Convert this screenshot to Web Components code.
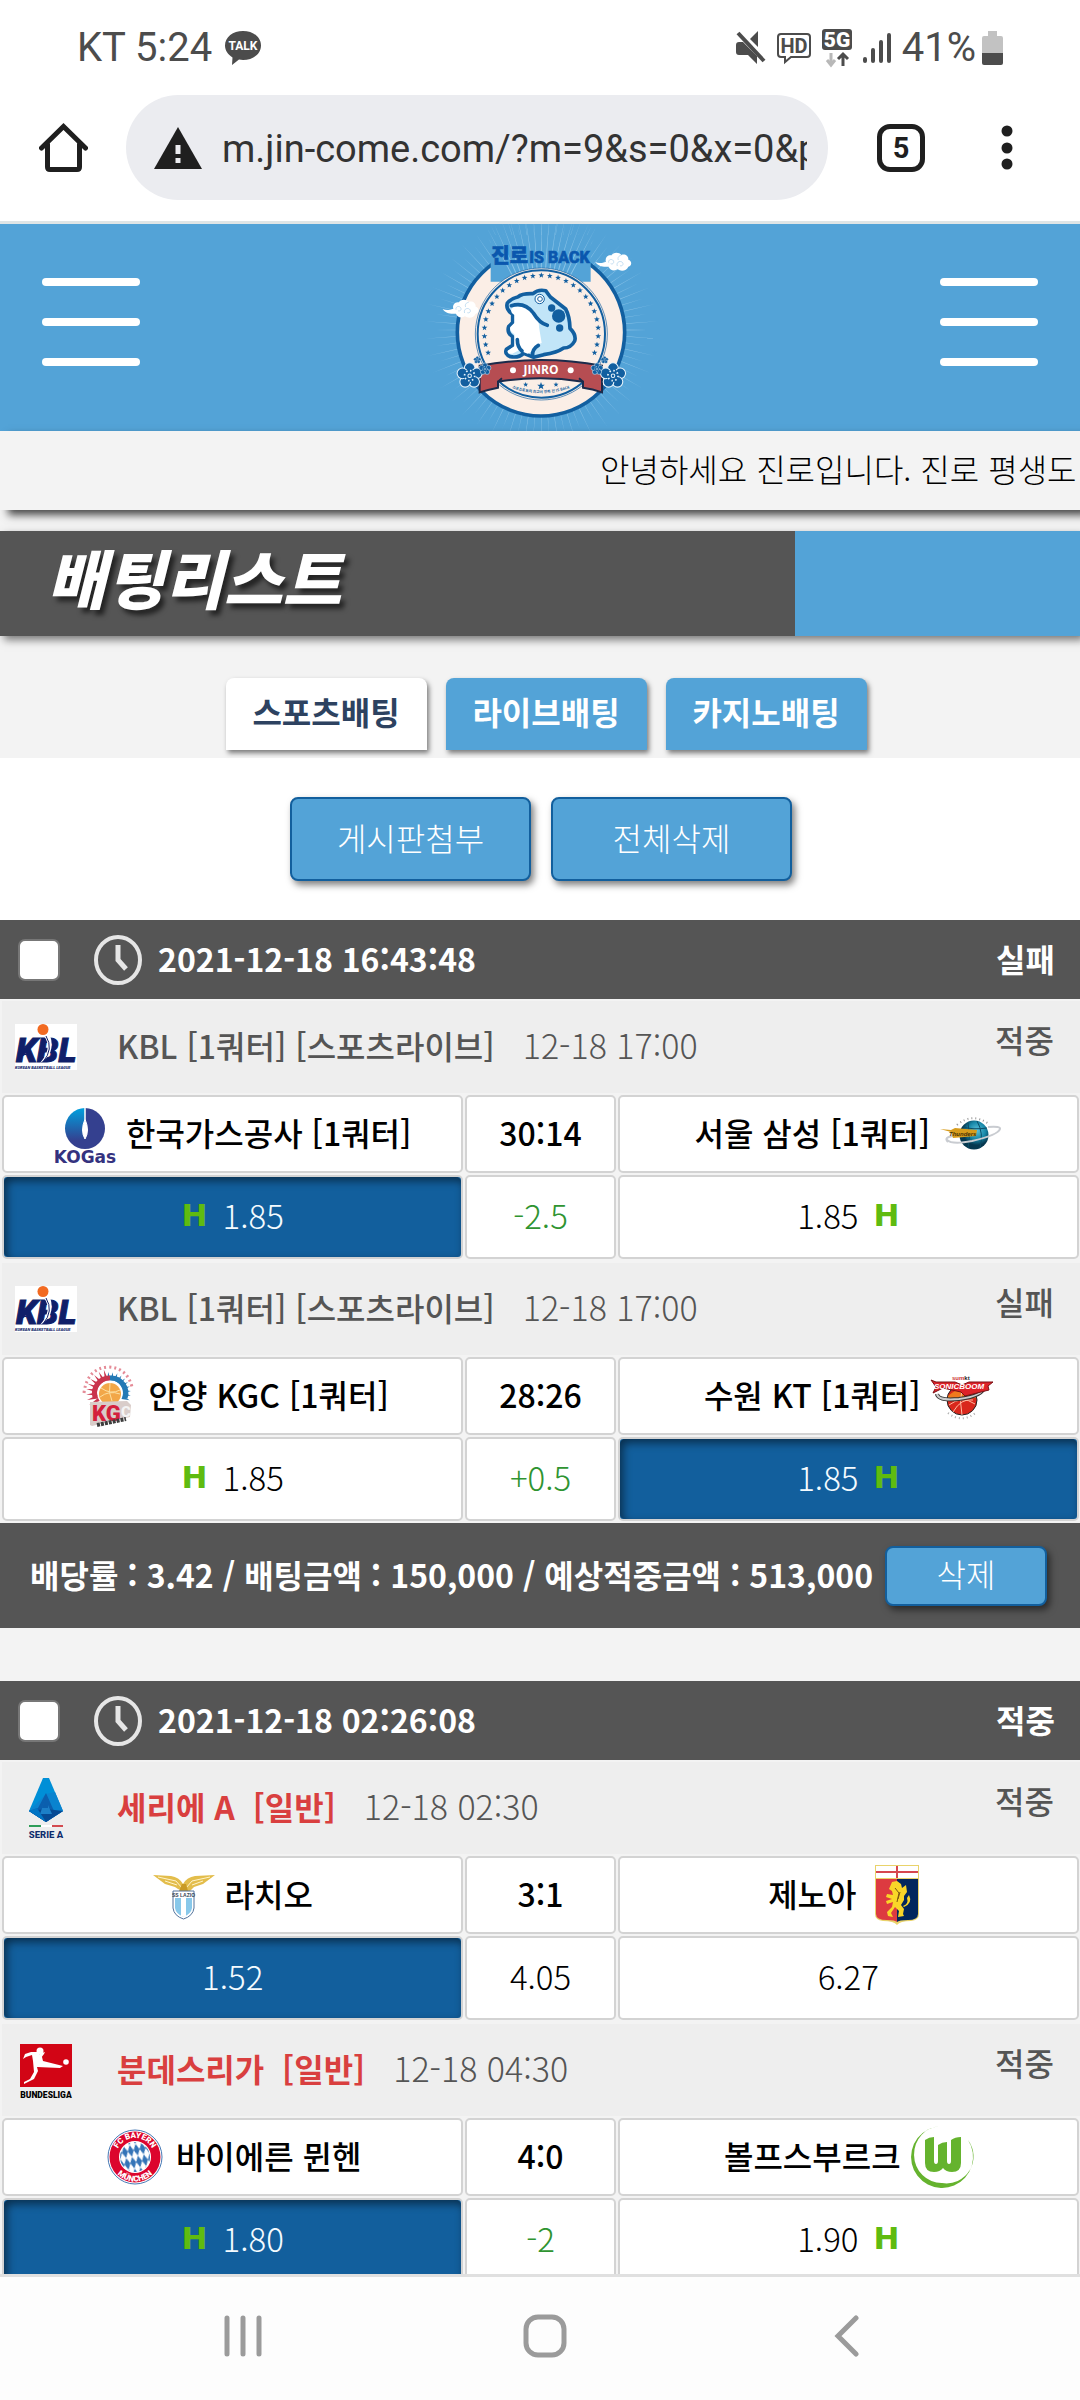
<!DOCTYPE html>
<html lang="ko">
<head>
<meta charset="utf-8">
<meta name="viewport" content="width=device-width, initial-scale=1">
<title>배팅리스트</title>
<style>
  html, body { margin: 0; height: 100%; }
  body {
    --blue: #53a3d7;
    --deep: #125f9d;
    --dark: #555;
    --page: #f3f3f3;
    display: flex;
    flex-direction: column;
    overflow: hidden;
    background: #fff;
    color: #000;
    font: 32px/40px "Noto Sans CJK KR", "Noto Sans", sans-serif;
  }
  main {
    flex: 1;
    min-height: 0;
    overflow: hidden;
    background: var(--page);
    border-top: 3px solid #dfe5e6;
    border-bottom: 3px solid #e0e0e0;
  }
  .tabs { display: flex; justify-content: center; gap: 19px; padding: 42px 0 8px 12px; }
  .actions { display: flex; justify-content: center; gap: 20px; padding: 39px 0 39px 2px; background: #fff; }
  bet-slip + bet-slip { margin-top: 53px; }
</style>
</head>
<body>
  <status-bar></status-bar>
  <browser-bar url="m.jin-come.com/?m=9&amp;s=0&amp;x=0&amp;p" tabs="5"></browser-bar>

  <main>
    <site-header></site-header>
    <notice-ticker>안녕하세요 진로입니다. 진로 평생도</notice-ticker>
    <page-title>배팅리스트</page-title>
    <nav class="tabs">
      <bet-tab active>스포츠배팅</bet-tab>
      <bet-tab>라이브배팅</bet-tab>
      <bet-tab>카지노배팅</bet-tab>
    </nav>
    <div class="actions">
      <action-button>게시판첨부</action-button>
      <action-button>전체삭제</action-button>
    </div>

    <bet-slip date="2021-12-18 16:43:48" result="실패" summary="배당률 : 3.42 / 배팅금액 : 150,000 / 예상적중금액 : 513,000">
      <bet-match logo="kbl" time="12-18 17:00" result="적중" home="한국가스공사 [1쿼터]" home-logo="kogas" away="서울 삼성 [1쿼터]" away-logo="samsung" score="30:14" odds="1.85,-2.5,1.85" handicap pick="home">KBL [1쿼터] [스포츠라이브]</bet-match>
      <bet-match logo="kbl" time="12-18 17:00" result="실패" home="안양 KGC [1쿼터]" home-logo="kgc" away="수원 KT [1쿼터]" away-logo="kt" score="28:26" odds="1.85,+0.5,1.85" handicap pick="away">KBL [1쿼터] [스포츠라이브]</bet-match>
    </bet-slip>

    <bet-slip date="2021-12-18 02:26:08" result="적중">
      <bet-match class="soccer" logo="seriea" time="12-18 02:30" result="적중" home="라치오" home-logo="lazio" away="제노아" away-logo="genoa" score="3:1" odds="1.52,4.05,6.27" pick="home">세리에 A&nbsp; [일반]</bet-match>
      <bet-match class="soccer" logo="bundesliga" time="12-18 04:30" result="적중" home="바이에른 뮌헨" home-logo="bayern" away="볼프스부르크" away-logo="wolfsburg" score="4:0" odds="1.80,-2,1.90" handicap pick="home">분데스리가&nbsp; [일반]</bet-match>
    </bet-slip>
  </main>

  <system-nav></system-nav>

<script>
// ---------- helpers ----------

const star = (x, y, r) => {
  let pts = [];
  for (let i = 0; i < 10; i++) {
    const a = Math.PI * (i / 5 - 0.5);
    const k = i % 2 ? r * 0.42 : r;
    pts.push((x + k * Math.cos(a)).toFixed(1) + ',' + (y + k * Math.sin(a)).toFixed(1));
  }
  return `<polygon points="${pts.join(' ')}"/>`;
};

const ring = (n, from, to, fn) => {
  let out = '';
  for (let i = 0; i < n; i++) {
    const a = (from + (to - from) * i / (n - 1)) * Math.PI / 180;
    out += fn(a, i);
  }
  return out;
};

const ray = (cx, cy, r1, r2, w) => a => {
  const p = (r, d) => (cx + r * Math.cos(a + d)).toFixed(1) + ',' + (cy + r * Math.sin(a + d)).toFixed(1);
  return `<polygon points="${p(r1, -w)} ${p(r2, 0)} ${p(r1, w)}"/>`;
};

const flower = (x, y, r) => `
  <g fill="#125fa0" stroke="#e8f4fb" stroke-width="${r / 12}">
    ${ring(5, -90, 198, a => `<circle cx="${(x + r * 0.6 * Math.cos(a)).toFixed(1)}" cy="${(y + r * 0.6 * Math.sin(a)).toFixed(1)}" r="${(r * 0.42).toFixed(1)}"/>`)}
  </g>
  <circle cx="${x}" cy="${y}" r="${r * 0.5}" fill="#125fa0"/>
  <circle cx="${x}" cy="${y}" r="${r * 0.4}" fill="none" stroke="#e8f4fb" stroke-width="${r * 0.14}" stroke-dasharray="${r * 0.12} ${r * 0.19}"/>
  <circle cx="${x}" cy="${y}" r="${r * 0.14}" fill="none" stroke="#e8f4fb" stroke-width="${r * 0.08}"/>`;

const cloud = (x, y) => `
  <g transform="translate(${x} ${y})">
    <path fill="#fff" d="M0 28c10 5 22 3 32-1-4-12 6-22 17-19C52-2 72-3 78 7c11-4 22 3 21 14 12 3 11 19 0 21-5 13-22 15-32 8-11 7-24 2-27-8C24 44 8 41 0 28z"/>
    <path fill="none" stroke="#a9cfea" stroke-width="2" d="M40 30c-2-9 9-13 14-6 4 7-3 12-8 9M66 40c-4-9 5-17 14-12 7 6 1 14-6 11M78 8c-8 1-12 7-9 14"/>
  </g>`;

// ---------- logos ----------

const LOGOS = {
  kbl: `<svg viewBox="0 0 62 46" width="62" height="46">
    <rect width="62" height="46" fill="#fff"/>
    <text x="1" y="38" font-family="Roboto" font-weight="900" font-style="italic" font-size="34" fill="#101f69" stroke="#101f69">KBL</text>
    <path d="M29 12q9 12-4 27 16-9 10-28z" fill="#fff"/>
    <path d="M31 12q8 13-3 26" fill="none" stroke="#101f69"/>
    <circle cx="28" cy="5.500" r="5.500" fill="#f26a21"/>
    <text x="0" y="45" font-family="Roboto" font-weight="900" font-style="italic" font-size="4" fill="#101f69">KOREAN BASKETBALL LEAGUE</text>
  </svg>`,

  seriea: `<svg viewBox="0 0 62 62" width="62" height="62">
    <path d="M28 1h6l14 33-17 11-17-11z" fill="#008fd7"/>
    <path d="M31 17 14 34l17 11 17-11-8-19z" fill="#0a83cf"/>
    <path d="M31 16l8 18 9 0-17 11-17-11 9-3z" fill="#0b5fae"/>
    <path d="M14 34l17-2 17 2-17 11z" fill="#064a94"/>
    <path d="M31 20l-4 11h6v-3l4 9H25" fill="#1c7fc8"/>
    <path d="M14 34l8-3 9 14z" fill="#0074c4"/>
    <path d="M14 49h12" stroke="#2e9d58" stroke-width="2"/><path d="M26 49h11" stroke="#fff" stroke-width="2"/><path d="M37 49h11" stroke="#d34b50" stroke-width="2"/>
    <text x="31" y="61" text-anchor="middle" font-family="Roboto" font-weight="800" font-size="9.500" fill="#0d2c6c">SERIE A</text>
  </svg>`,

  bundesliga: `<svg viewBox="0 0 62 62" width="62" height="62">
    <rect x="5" y="5" width="52" height="43" fill="#d20515"/>
    <g fill="#fff"><circle cx="25" cy="12" r="3.500"/><circle cx="51" cy="23" r="2.800"/>
    <path d="M24 13 16 13 10 15 8 20 11 18 17 16 18 22 19 33 15 40 9 43 9 45 19 40 23 32 22 28 45 29 48 27 44 26 28 22 27 18 24 15z"/>
    <path d="M24 15 30 13 29 15 26 19z"/></g>
    <text x="31" y="59" text-anchor="middle" font-family="Roboto" font-weight="900" font-size="8.500" fill="#000">BUNDESLIGA</text>
  </svg>`,

  kogas: `<svg viewBox="0 0 62 62" width="62" height="62">
    <defs><linearGradient id="kg" x1="0" y1="0" x2="0" y2="1"><stop offset="0" stop-color="#00a0de"/><stop offset=".8" stop-color="#34408f"/></linearGradient></defs>
    <path d="M31 5a20 20.500 0 0 0 0 41z" fill="url(#kg)"/>
    <path d="M31 5a20 20.500 0 0 1 0 41z" fill="#34408f"/>
    <path d="M31 5v11q-5 12 0 20 5-8 0-20z" fill="#fff" stroke="#fff"/>
    <text x="31" y="60" text-anchor="middle" font-family="DejaVu Sans" font-weight="700" font-size="17" fill="#34327f">KOGas</text>
  </svg>`,

  samsung: `<svg viewBox="0 0 62 62" width="62" height="62">
    <defs><radialGradient id="sg" cx=".6" cy=".35"><stop offset="0" stop-color="#5cc4dd"/><stop offset=".6" stop-color="#1787a8"/><stop offset="1" stop-color="#06384f"/></radialGradient></defs>
    <path d="M17 22q15-13 32-1" fill="none" stroke="#999" stroke-width="2" stroke-dasharray="1 3"/>
    <circle cx="34" cy="32" r="14.500" fill="url(#sg)"/>
    <path d="M23 24q10 3 24 1M28 20q3 13 0 25M37 18q7 12 3 27" fill="none" stroke="#0b4c66"/>
    <path d="M8 39q-5-5 6-6M7 37q5 5 25 1 26-6 28-12 1-3-12-2" fill="none" stroke="#c9ccd1" stroke-width="2"/>
    <path d="M0 26l11 1 4-2 22 2-1 6-23 2-2-6z" fill="#d79c1c"/>
    <text x="9" y="33" font-family="Liberation Sans" font-weight="700" font-style="italic" font-size="6" fill="#4a3204">Thunders</text>
  </svg>`,

  kgc: `<svg viewBox="0 0 62 62" width="62" height="62">
    <path d="M7 28Q10 3 32 2q18 1 23 20" fill="none" stroke="#e58b97" stroke-width="3" stroke-dasharray="2 3"/>
    <g fill="#c9344d">${ring(9, 150, 255, ray(33, 28, 13, 24, .13))}</g>
    <g fill="#2379b5">${ring(10, 265, 380, ray(33, 28, 13, 21, .13))}</g>
    <path d="M18 32a15 15 0 0 1 15-19" fill="none" stroke="#c9344d" stroke-width="5"/>
    <path d="M33 13a15 15 0 0 1 15 20" fill="none" stroke="#2379b5" stroke-width="5"/>
    <circle cx="33" cy="29" r="11" fill="#f2a748"/>
    <path d="M24 23q10 7 19 2M33 18q-2 10 2 18M23 32q9-7 20-3" fill="none" stroke="#fde0a0"/>
    <path d="M13 37l37-1 4 4-1 12-38 9-2-1z" fill="#d9cdca"/>
    <text x="15" y="56" font-family="Roboto" font-weight="900" font-size="22" fill="#d4203c">KG</text>
    <text x="44" y="52" font-family="Roboto" font-weight="900" font-size="15" fill="#f4f4f4">C</text>
    <path d="M20 60l29-6" stroke="#3d3d3d" stroke-width="4" stroke-dasharray="3 1"/>
  </svg>`,

  kt: `<svg viewBox="0 0 62 62" width="62" height="62">
    <circle cx="31" cy="35" r="15" fill="#d9271c" stroke="#222"/>
    <path d="M17 31q14-13 28-2v4l-28 2z" fill="#ef7a1d"/>
    <path d="M18 40q13-10 26-1M31 24q-3 12 0 26M22 47q8-14 20-12" fill="none" stroke="#ffb9a0"/>
    <path d="M6 29q1 7 22 5 24-3 25-12" fill="none" stroke="#333" stroke-width="4"/>
    <path d="M6 29q1 7 22 5 24-3 25-12" fill="none" stroke="#ccc" stroke-width="2"/>
    <path d="M0 15l5 2 19 0 7 3 7-3 24 0-5 4 1 4-24 6-4-4-18-4-10 5 3-6z" fill="#dd2228" stroke="#7a1014"/>
    <text x="3" y="24" font-family="Liberation Sans" font-weight="700" font-style="italic" font-size="8" fill="#fff">SONICBOOM</text>
    <text x="21" y="15" font-family="Liberation Sans" font-weight="700" font-size="6" fill="#c33">sum<tspan fill="#222">kt</tspan></text>
    <path d="M17 48q14 11 29-1" fill="none" stroke="#aaa" stroke-width="2" stroke-dasharray="1 3"/>
  </svg>`,

  lazio: `<svg viewBox="0 0 62 62" width="62" height="62">
    <path d="M0 11l18 1q8 1 12 8 4-7 12-8l20-1-12 9-9 3-4 4-4 1-3-1-5-2-3-2-10-3z" fill="#e3bd4b"/>
    <path d="M5 13l18 4 6 7M12 17l12 4M57 13l-18 4-6 7M50 17l-11 4" fill="none" stroke="#fff4cc"/>
    <path d="M26 27l3-7h4l2 7z" fill="#c99a24"/>
    <path d="M20 27h21v17q-1 8-10.500 11Q21 52 20 44z" fill="#fff" stroke="#53739c"/>
    <path d="M22 34h17v10q-1 6-8.500 9Q23 50 22 44z" fill="#88c8ea"/>
    <path d="M28 34h5v18l-2 1-3-1z" fill="#fff"/>
    <text x="30.500" y="33" text-anchor="middle" font-family="Liberation Sans" font-weight="700" font-size="5" fill="#345">SS LAZIO</text>
  </svg>`,

  genoa: `<svg viewBox="0 0 62 62" width="62" height="62">
    <path d="M9 1h44v49q0 6-8 7-11 0-14 4-3-4-14-4-8-1-8-7z" fill="#e9d36b"/>
    <path d="M10 2h42v12H10z" fill="#fff"/>
    <path d="M10 15h21v43q-2-2-10-2-11 0-11-6z" fill="#dd3a40"/>
    <path d="M31 15h21v35q0 6-10 6-9 0-11 2z" fill="#02275d"/>
    <path d="M31 2v12M10 8h42" stroke="#d6474f" stroke-width="2"/>
    <path d="M26 18l5-1 4 3 1 4 4-3 1 7-3 4 0 4-3 5 3 4-1 5 1 2-6 1 1-6-4-4-4 6 2 4-5-1-1-4 5-5 1-5-6 2-1-3 6-2-6-2 1-3 6 1-1-4-3-2z" fill="#f9d628"/>
    <path d="M37 42q6-2 4-8l2-3q4 8-5 12z" fill="#f9d628"/>
    <path d="M29 24l4 5-2 9M34 28l-2 7" fill="none" stroke="#7a5410"/>
  </svg>`,

  bayern: `<svg viewBox="0 0 62 62" width="62" height="62">
    <defs>
      <path id="up" d="M12 31a19 19 0 0 1 38 0"/>
      <path id="down" d="M6.500 31a24.500 24.500 0 0 0 49 0"/>
      <pattern id="rhomb" width="6" height="12" patternUnits="userSpaceOnUse" patternTransform="rotate(-12)"><rect width="6" height="12" fill="#fff"/><path d="M3 0l3 6-3 6-3-6z" fill="#3474b7"/></pattern>
    </defs>
    <circle cx="31" cy="31" r="27" fill="#fff" stroke="#4679b5"/>
    <circle cx="31" cy="31" r="25.500" fill="#dc052d"/>
    <circle cx="31" cy="31" r="16" fill="#fff"/>
    <circle cx="31" cy="31" r="15" fill="url(#rhomb)"/>
    <g font-family="Roboto" font-weight="900" font-size="8" fill="#fff" text-anchor="middle">
      <text><textPath href="#up" startOffset="50%">FC BAYERN</textPath></text>
      <text><textPath href="#down" startOffset="50%">MÜNCHEN</textPath></text>
    </g>
  </svg>`,

  wolfsburg: `<svg viewBox="0 0 62 62" width="62" height="62">
    <path fill="#65b32e" d="M30 0A31 31 0 1 0 57 14 27 27 0 0 1 31 57 27 28 0 0 1 30 0z"/>
    <path fill="#65b32e" d="M14 14q4-3 9-3v24q0 3 2 3t2-3V19q4-3 9-3v19q0 3 2 3t2-3V14q4-3 10-3v26q0 9-9 9-6 0-9-4-3 4-9 4-9 0-9-9z"/>
  </svg>`,
};

class TeamLogo extends HTMLElement {
  connectedCallback() {
    this.attachShadow({ mode: 'open' }).innerHTML = `
      <style>
        :host { display: flex; flex: none; align-items: center; width: 62px; }
        svg { display: block; overflow: visible; }
      </style>
      ${LOGOS[this.getAttribute('name')]}`;
  }
}
customElements.define('team-logo', TeamLogo);

// ---------- phone chrome ----------

class StatusBar extends HTMLElement {
  connectedCallback() {
    this.attachShadow({ mode: 'open' }).innerHTML = `
      <style>
        :host {
          display: flex;
          align-items: center;
          gap: 13px;
          height: 64px;
          padding: 16px 77px 0;
          font: 40px/48px Roboto, sans-serif;
          color: #4c4c4c;
        }
        .right { display: flex; align-items: center; gap: 11px; margin-left: auto; }
        .power { display: flex; align-items: center; gap: 6px; }
        svg { display: block; overflow: visible; }
      </style>
      <span>KT 5:24</span>
      <svg width="36" height="36" viewBox="0 0 36 36" fill="#4c4c4c">
        <path d="M18 1C8 1 0 7 0 15.500c0 5 3 9 7.500 12L7 35l7-5.500 4 .5c10 0 18-6 18-14.500S28 1 18 1z"/>
        <text x="18" y="20" text-anchor="middle" font-size="12" font-weight="700" fill="#fff">TALK</text>
      </svg>
      <div class="right">
        <svg width="30" height="34" viewBox="0 0 30 34" fill="#4c4c4c">
          <path d="M0 14q0-3 3-3h4l14 14v8l-9-9H3q-3 0-3-3zM14 8l8-8v16z"/>
          <path d="M2 2l26 28" stroke="#4c4c4c" stroke-width="4"/>
        </svg>
        <svg width="34" height="30" viewBox="0 0 34 30">
          <path d="M4 1h26q3 0 3 3v17q0 3-3 3H14l-6 5v-5H4q-3 0-3-3V4q0-3 3-3z" fill="none" stroke="#4c4c4c" stroke-width="2"/>
          <text x="17" y="20" text-anchor="middle" font-size="20" font-weight="700" fill="#4c4c4c">HD</text>
        </svg>
        <svg width="30" height="40" viewBox="0 0 30 40">
          <rect y="1" width="30" height="21" rx="3" fill="#4c4c4c"/>
          <text x="15" y="19" text-anchor="middle" font-size="21" font-weight="900" fill="#fff">5G</text>
          <path d="M9 25v11M5 32l4 5 4-5" fill="none" stroke="#b8b8b8" stroke-width="3"/>
          <path d="M21 38V27M16 31l5-5 5 5" fill="none" stroke="#4c4c4c" stroke-width="3"/>
        </svg>
        <svg width="28" height="32" viewBox="0 0 28 32" stroke="#4c4c4c" stroke-width="4" stroke-linecap="round">
          <path d="M2 27v2M10 18v11M18 10v19M26 3v26"/>
        </svg>
        <div class="power">
          <span>41%</span>
          <svg width="21" height="34" viewBox="0 0 21 34">
            <path d="M6 0h9v5h4q2 0 2 2v15H0V7q0-2 2-2h4z" fill="#c2c2c2"/>
            <path d="M0 22h21v10q0 2-2 2H2q-2 0-2-2z" fill="#4c4c4c"/>
          </svg>
        </div>
      </div>`;
  }
}
customElements.define('status-bar', StatusBar);

class BrowserBar extends HTMLElement {
  connectedCallback() {
    this.attachShadow({ mode: 'open' }).innerHTML = `
      <style>
        :host { display: flex; align-items: center; padding: 15px 67px 21px 39px; }
        button { flex: none; padding: 0; border: 0; background: none; font: inherit; color: #1f1f1f; }
        svg { display: block; }
        .url {
          flex: 1;
          display: flex;
          align-items: center;
          gap: 20px;
          min-width: 0;
          height: 105px;
          box-sizing: border-box;
          margin: 0 49px 0 38px;
          padding: 0 21px 0 28px;
          border-radius: 53px;
          background: #ebecf0;
        }
        .url svg { flex: none; }
        input {
          flex: 1;
          min-width: 0;
          padding: 2px 0 0;
          border: 0;
          outline: 0;
          background: none;
          font: 38px/48px Roboto, sans-serif;
          color: #333;
        }
        .count {
          width: 48px;
          height: 48px;
          margin-right: 76px;
          border: 5px solid #1f1f1f;
          border-radius: 13px;
          font: 700 29px/38px Roboto, sans-serif;
        }
      </style>
      <button aria-label="홈">
        <svg width="49" height="50" viewBox="0 0 49 50"><path d="M2.500 25 24.500 3.500 46.500 25M8.500 21v23q0 2.500 2.500 2.500h27q2.500 0 2.500-2.500V21" fill="none" stroke="#1f1f1f" stroke-width="5" stroke-linecap="round"/></svg>
      </button>
      <div class="url">
        <svg width="48" height="42" viewBox="0 0 48 42"><path d="M24 0l24 42H0z" fill="#1f1f1f"/><path d="M24 18v9M24 31v5" stroke="#ebecf0" stroke-width="5"/></svg>
        <input type="text" aria-label="주소" readonly value="${this.getAttribute('url').replace(/&/g, '&amp;')}">
      </div>
      <button class="count" aria-label="탭">${this.getAttribute('tabs')}</button>
      <button aria-label="메뉴">
        <svg width="12" height="46" viewBox="0 0 12 46" fill="#1f1f1f"><circle cx="6" cy="6" r="5.500"/><circle cx="6" cy="23" r="5.500"/><circle cx="6" cy="39" r="5.500"/></svg>
      </button>`;
  }
}
customElements.define('browser-bar', BrowserBar);

class SystemNav extends HTMLElement {
  connectedCallback() {
    this.attachShadow({ mode: 'open' }).innerHTML = `
      <style>
        :host { display: grid; grid-template-columns: repeat(3, 1fr); height: 123px; padding: 0 82px 0 92px; box-sizing: border-box; background: #fdfdfd; }
        button { display: flex; align-items: center; justify-content: center; border: 0; background: none; padding: 0 0 6px; }
      </style>
      <button aria-label="최근 앱"><svg width="38" height="42" viewBox="0 0 38 42" stroke="#9b9b9b" stroke-width="5" stroke-linecap="round"><path d="M3 3v36M19 3v36M35 3v36"/></svg></button>
      <button aria-label="홈"><svg width="44" height="44" viewBox="0 0 44 44"><rect x="3" y="3" width="38" height="38" rx="12" fill="none" stroke="#9b9b9b" stroke-width="5"/></svg></button>
      <button aria-label="뒤로"><svg width="26" height="42" viewBox="0 0 26 42"><path d="M22 3 4 21l18 18" fill="none" stroke="#9b9b9b" stroke-width="5" stroke-linecap="round"/></svg></button>`;
  }
}
customElements.define('system-nav', SystemNav);

// ---------- site ----------

class SiteHeader extends HTMLElement {
  connectedCallback() {
    this.attachShadow({ mode: 'open' }).innerHTML = `
      <style>
        :host { display: flex; justify-content: space-between; align-items: center; height: 207px; padding: 0 42px; background: var(--blue); }
        button { display: grid; gap: 32px; width: 98px; padding: 0 0 12px; border: 0; background: none; }
        i { height: 8px; border-radius: 4px; background: #fff; }
        svg { display: block; overflow: hidden; }
      </style>
      <button aria-label="메뉴"><i></i><i></i><i></i></button>
      <a href="#" aria-label="진로 IS BACK">${this._logo()}</a>
      <button aria-label="내 정보"><i></i><i></i><i></i></button>`;
  }

  _logo() {
    return `
      <svg width="280" height="207" viewBox="0 27 840 621">
        <g fill="#8cc4e8">${ring(85, 0, 360, (a, i) => ray(424, 345, 180, i % 2 ? 350 : 320, .009)(a))}</g>
        <circle cx="423" cy="352" r="251" fill="#fbeee6" stroke="#125fa0" stroke-width="11"/>
        <path d="M272 60h300v140H272z" fill="#53a3d7"/>
        <g fill="#8cc4e8">${ring(15, -118, -62, ray(424, 345, 180, 350, .009))}</g>
        <circle cx="424" cy="357" r="198" fill="#fbeee6" stroke="#125fa0" stroke-width="2"/>
        <circle cx="424" cy="357" r="191" fill="#fbeee6" stroke="#125fa0" stroke-width="6"/>
        <g fill="#125fa0">${ring(27, -201, 21, a => star(424 + 171 * Math.cos(a), 352 + 171 * Math.sin(a), 9))}</g>
        <g fill="#0a57ae" stroke="#0a57ae" stroke-width="2">
          <text x="274" y="144" font-family="Noto Sans CJK KR" font-weight="900" font-size="60">진로</text>
          <text x="388" y="144" font-family="Roboto" font-weight="800" font-size="48">IS BACK</text>
        </g>
        ${cloud(586, 113)}
        ${cloud(128, 254)}

        <path fill="#c1e5f8" stroke="#125fa0" stroke-width="11" stroke-linejoin="round" d="M355 245q10-10 44-9 15-14 38-9l14 19q18 14 46 36 12 22 13 58 20 20 14 38-11 21-33 21-20 14-60 20l-30 8-30-12q-14 14-40 10-18-7-12-22l19-12v-26q-18-12-12-30l12-12v-25q-22-15-16-34 10-13 33-19z"/>
        <path fill="#fff" d="M340 276q40-8 62 20 16 20 15 40l8 48q-18 4-22 22l-20 10-26-10-20 10q-15 2-14-8l20-14v-36q-16-12-12-22l12-12v-24q-18-12-3-24z"/>
        <path fill="none" stroke="#125fa0" stroke-width="11" stroke-linecap="round" d="M334 272q40-12 66 22 18 30 42 37M352 374q0 22 14 34M415 391q-20 12-17 32"/>
        <circle cx="419" cy="252" r="14" fill="#fff" stroke="#125fa0" stroke-width="3"/><circle cx="420" cy="252" r="7" fill="#fff" stroke="#125fa0" stroke-width="3"/>
        <g fill="#125fa0"><circle cx="476" cy="303" r="20"/><circle cx="455" cy="279" r="11"/><circle cx="479" cy="339" r="11"/></g>

        <path fill="#b64d52" stroke="#1b2b4b" stroke-width="6" d="M239 452q185-34 367 0v80q-28-10-57-14v-18q-130-20-255 0v18q-30 6-55 14z"/>
        <path fill="none" stroke="#1b2b4b" stroke-width="6" d="M549 500l-12-10M294 500l12-10"/>
        <text x="423" y="478" text-anchor="middle" font-family="Open Sans" font-weight="700" font-size="36" fill="#fff">JINRO</text>
        <circle cx="339" cy="466" r="9" fill="#fff"/><circle cx="512" cy="466" r="9" fill="#fff"/>
        <g fill="#125fa0">${star(423, 513, 12)}${star(377, 509, 8)}${star(468, 509, 8)}</g>
        <path id="motto" d="M330 517q92 35 186 0" fill="none"/>
        <text font-family="Noto Sans CJK KR" font-weight="700" font-size="11" fill="#125fa0" text-anchor="middle"><textPath href="#motto" startOffset="50%">스포츠토토의 최고의 만족 진 IS BACK</textPath></text>
        ${flower(209, 482, 38)}${flower(639, 482, 38)}
        ${flower(255, 462, 18)}${flower(591, 462, 18)}
        ${flower(232, 435, 11)}${flower(614, 435, 11)}
      </svg>`;
  }
}
customElements.define('site-header', SiteHeader);

class NoticeTicker extends HTMLElement {
  connectedCallback() {
    this.attachShadow({ mode: 'open' }).innerHTML = `
      <style>
        :host { display: block; padding: 17px 0 22px 600px; overflow: hidden; font-weight: 300; white-space: nowrap; box-shadow: 8px 5px 8px rgba(0, 0, 0, .7); }
      </style>
      <slot></slot>`;
  }
}
customElements.define('notice-ticker', NoticeTicker);

class PageTitle extends HTMLElement {
  connectedCallback() {
    this.attachShadow({ mode: 'open' }).innerHTML = `
      <style>
        :host {
          display: block;
          margin-top: 21px;
          padding: 5px 47px 20px;
          background: linear-gradient(90deg, var(--dark) 73.6%, var(--blue) 73.6%);
          box-shadow: 4px 4px 8px rgba(0, 0, 0, .5);
        }
        h1 { margin: 0; font-size: 64px; line-height: 80px; font-weight: 900; font-style: italic; color: #fff; text-shadow: 4px 5px 5px rgba(0, 0, 0, .6); }
      </style>
      <h1><slot></slot></h1>`;
  }
}
customElements.define('page-title', PageTitle);

class BetTab extends HTMLElement {
  connectedCallback() {
    this.attachShadow({ mode: 'open' }).innerHTML = `
      <style>
        :host { display: block; }
        button {
          width: 201px;
          padding: 13px 0 19px;
          border: 0;
          border-radius: 8px 8px 0 0;
          background: var(--blue);
          color: #fff;
          font: inherit;
          font-weight: 700;
          box-shadow: 2px 3px 5px rgba(0, 0, 0, .5);
        }
        :host([active]) button { background: #fff; color: #2d4260; }
      </style>
      <button><slot></slot></button>`;
  }
}
customElements.define('bet-tab', BetTab);

class ActionButton extends HTMLElement {
  connectedCallback() {
    this.attachShadow({ mode: 'open' }).innerHTML = `
      <style>
        :host { display: block; }
        button {
          width: 241px;
          padding: 18px 0 22px;
          border: 2px solid var(--deep);
          border-radius: 8px;
          background: var(--blue);
          color: #fff;
          font: inherit;
          font-weight: 300;
          box-shadow: 3px 4px 7px rgba(0, 0, 0, .5);
        }
        :host([small]) button { width: 162px; padding: 5px 0 11px; }
      </style>
      <button><slot></slot></button>`;
  }
}
customElements.define('action-button', ActionButton);

class BetSlip extends HTMLElement {
  connectedCallback() {
    const date = this.getAttribute('date');
    const summary = this.getAttribute('summary');
    this.attachShadow({ mode: 'open' }).innerHTML = `
      <style>
        :host { display: block; }
        header, footer { display: flex; align-items: center; background: var(--dark); color: #fff; font-weight: 700; }
        header { height: 79px; padding: 0 25px 0 18px; }
        span { padding-bottom: 4px; }
        label { display: flex; align-items: center; }
        input {
          appearance: none;
          width: 42px;
          height: 42px;
          margin: 0 34px 0 0;
          border: 2px solid #777;
          border-radius: 7px;
          background: #fff;
        }
        svg { margin-right: 16px; }
        .result { margin-left: auto; }
        footer { justify-content: space-between; height: 105px; padding: 0 33px 0 30px; white-space: nowrap; }
      </style>
      <header>
        <label>
          <input type="checkbox">
          <svg width="48" height="50" viewBox="0 0 48 50" fill="none" stroke="#e6e6e6"><ellipse cx="24" cy="25" rx="22" ry="23" stroke-width="4"/><path d="M24 10v15l8 9" stroke-width="5"/></svg>
          <span>${date}</span>
        </label>
        <span class="result">${this.getAttribute('result')}</span>
      </header>
      <slot></slot>
      ${summary ? `<footer><span>${summary}</span><action-button small>삭제</action-button></footer>` : ''}`;
  }
}
customElements.define('bet-slip', BetSlip);

class BetMatch extends HTMLElement {
  connectedCallback() {
    this.attachShadow({ mode: 'open' });
    this._render();
  }

  _render() {
    const get = name => this.getAttribute(name);
    const [home, mid, away] = get('odds').split(',');
    const handicap = this.hasAttribute('handicap');
    const mark = handicap ? '<b class="mark">H</b>' : '';
    const on = side => get('pick') === side ? 'class="on"' : '';

    this.shadowRoot.innerHTML = `
      <style>
        :host { display: block; padding-top: 2px; }
        .league { display: flex; align-items: center; height: 92px; margin-left: 2px; padding: 0 26px 0 13px; background: #eee; color: var(--dark); }
        span, time { padding-bottom: 4px; }
        .name { margin-left: 40px; font-weight: 500; white-space: pre; }
        :host(.soccer) .name { font-weight: 700; color: #d93f3f; }
        time { margin-left: 28px; font-size: 34px; font-weight: 300; }
        .result { margin-left: auto; padding-bottom: 16px; font-weight: 500; }
        table { width: calc(100% + 1px); table-layout: fixed; border-spacing: 2px; }
        col.mid { width: 14%; }
        th, td { box-sizing: border-box; padding: 0; border: 2px solid #d3d3d3; border-radius: 5px; background: #fff; }
        th { height: 78px; font-weight: 500; }
        td { height: 84px; font-size: 33px; font-weight: 300; }
        div.cell { display: flex; align-items: center; justify-content: center; gap: 10px; white-space: nowrap; }
        td .cell { gap: 15px; }
        td.on { background: var(--deep); color: #f4fbff; box-shadow: inset 3px 4px 8px rgba(0, 0, 0, .5); }
        td.line { color: #2f9431; }
        .mark { padding-bottom: 4px; font: 700 31px/40px "DejaVu Sans", sans-serif; color: #5fbb10; }
      </style>
      <div class="league">
        <team-logo name="${get('logo')}"></team-logo>
        <span class="name"><slot></slot></span>
        <time>${get('time')}</time>
        <span class="result">${get('result')}</span>
      </div>
      <table>
        <colgroup><col><col class="mid"><col></colgroup>
        <tr>
          <th><div class="cell"><team-logo name="${get('home-logo')}"></team-logo><span>${get('home')}</span></div></th>
          <th><div class="cell"><span>${get('score')}</span></div></th>
          <th><div class="cell"><span>${get('away')}</span><team-logo name="${get('away-logo')}"></team-logo></div></th>
        </tr>
        <tr>
          <td ${on('home')}><div class="cell">${mark}<span>${home}</span></div></td>
          <td ${handicap ? 'class="line"' : ''}><div class="cell"><span>${mid}</span></div></td>
          <td ${on('away')}><div class="cell"><span>${away}</span>${mark}</div></td>
        </tr>
      </table>`;
  }
}
customElements.define('bet-match', BetMatch);
</script>
</body>
</html>
